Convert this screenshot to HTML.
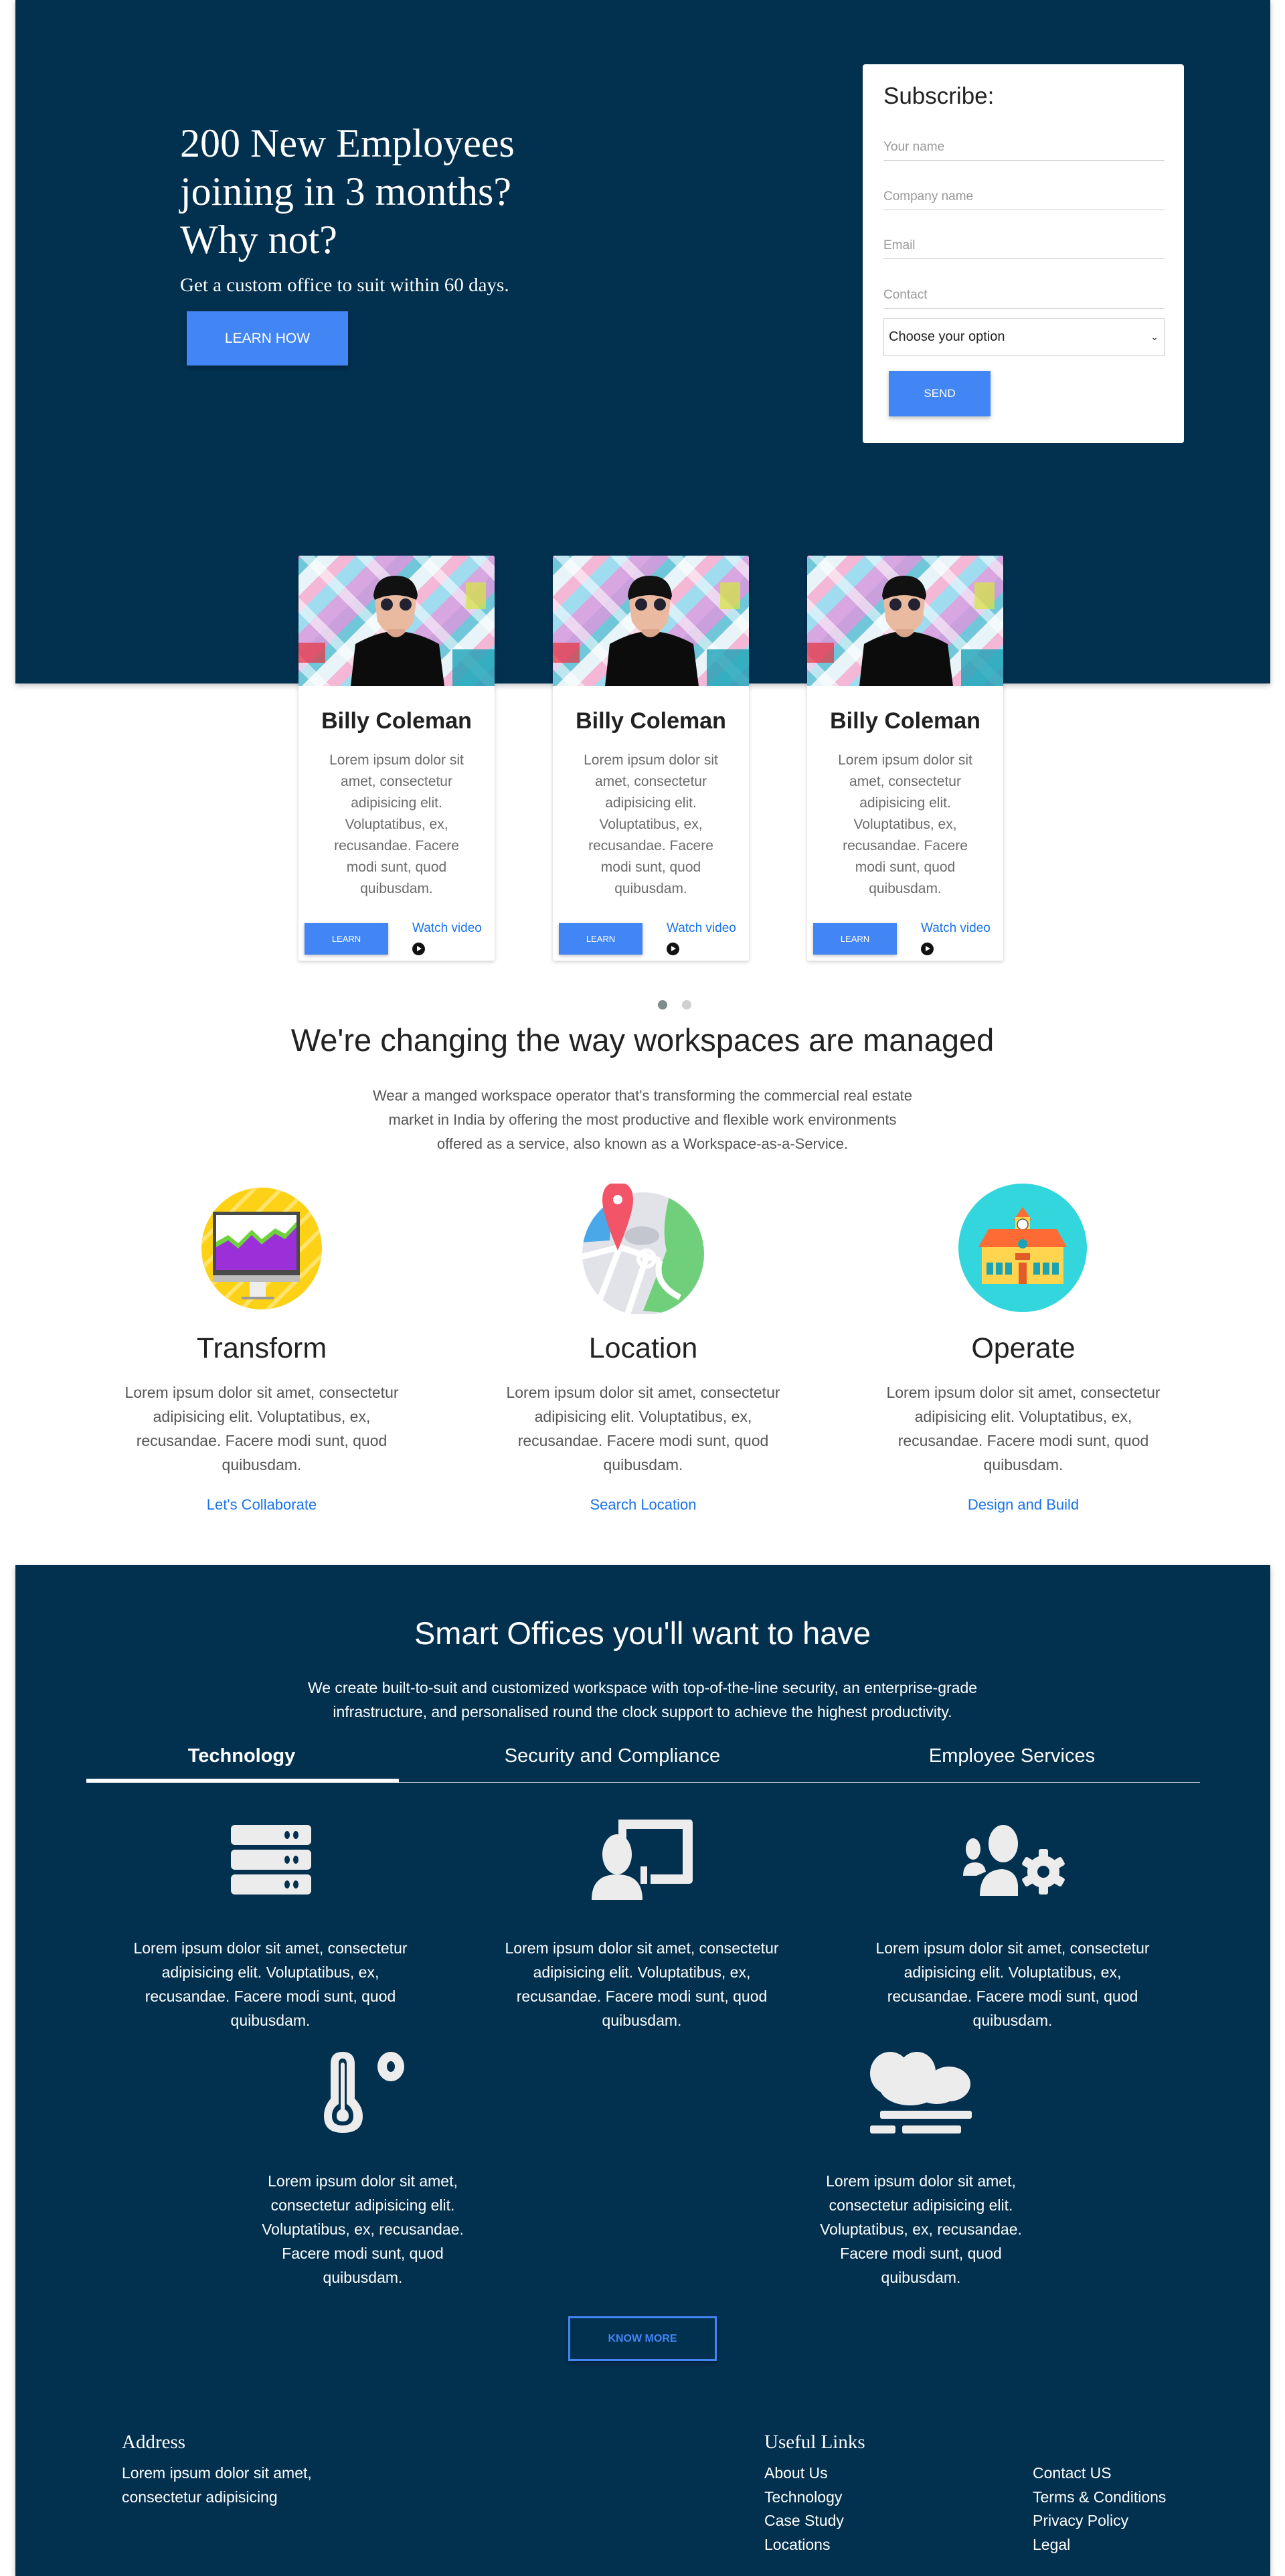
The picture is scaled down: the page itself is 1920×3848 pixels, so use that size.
<!DOCTYPE html>
<html><head><meta charset="utf-8"><style>
*{box-sizing:border-box;margin:0;padding:0}
body{width:1920px;height:3841px;position:relative;overflow:hidden;background:#fff;font-family:"Liberation Sans",Arial,sans-serif}
.a{position:absolute}
.dark{background:#02304f;box-shadow:0 3px 8px rgba(0,0,0,.25)}
.ser{font-family:"Liberation Serif","Times New Roman",serif;color:#fff}
.inp{position:absolute;left:1320px;width:420px;border-bottom:1px solid #ccc;color:#999;font-size:19px;height:40px;line-height:40px}
.btn{position:absolute;background:#4285f4;color:#fff;text-align:center;box-shadow:0 3px 6px rgba(0,0,0,.25)}
.card{position:absolute;top:830px;width:293px;height:605px;background:#fff;box-shadow:0 2px 6px rgba(0,0,0,.2);border-radius:3px;overflow:hidden}
.photo{position:absolute;left:0;top:0;width:293px;height:195px;overflow:hidden;
background:
repeating-linear-gradient(45deg,rgba(255,255,255,.0) 0 18px,rgba(255,255,255,.55) 18px 34px,rgba(0,0,0,0) 34px 60px),
repeating-linear-gradient(-45deg,#d8a6e0 0 22px,#9fdcef 22px 44px,#f4b7d6 44px 62px,#e8f4f8 62px 84px,#6fc7d9 84px 100px,#c9a0dc 100px 120px)}
.card h3{position:absolute;top:228px;left:0;width:293px;text-align:center;font-size:34px;font-weight:bold;color:#212121}
.card p{position:absolute;top:290px;left:0;width:293px;text-align:center;font-size:21px;line-height:32px;color:#6b6b6b;white-space:nowrap}
.cbtn{position:absolute;left:9px;top:549px;width:125px;height:47px;background:#4285f4;color:#fff;font-size:13px;line-height:47px;text-align:center;box-shadow:0 2px 5px rgba(0,0,0,.25)}
.wv{position:absolute;left:170px;top:546px;font-size:19px;color:#1a73e8}
.play{position:absolute;left:170px;top:578px;width:19px;height:19px;border-radius:50%;background:#111}
.play:after{content:"";position:absolute;left:7px;top:5px;border-left:7px solid #fff;border-top:4.5px solid transparent;border-bottom:4.5px solid transparent}
.ctr{text-align:center;white-space:nowrap}
.col{position:absolute;width:560px;text-align:center;white-space:nowrap}
.col h4{font-size:43px;font-weight:normal;color:#222;height:50px}
.col p{font-size:23px;line-height:36px;color:#555;margin-top:22px}
.col a{display:block;margin-top:29px;font-size:22px;color:#1a73e8;text-decoration:none}
.wt{position:absolute;width:520px;text-align:center;color:#fff;font-size:23px;line-height:36px;white-space:nowrap}
.fl{position:absolute;color:#fff;font-size:23px;line-height:35.7px}
</style></head><body>

<div class="a dark" style="left:23px;top:0;width:1875px;height:1021px"></div>

<div class="a ser" style="left:269px;top:178px;font-size:60px;line-height:72px">200 New Employees<br>joining in 3 months?<br>Why not?</div>
<div class="a ser" style="left:269px;top:409px;font-size:29px;line-height:34px">Get a custom office to suit within 60 days.</div>
<div class="btn" style="left:279px;top:465px;width:241px;height:81px;line-height:81px;font-size:21px">LEARN HOW</div>

<div class="a" style="left:1289px;top:96px;width:480px;height:566px;background:#fff;border-radius:4px"></div>
<div class="a" style="left:1320px;top:124px;font-size:35px;color:#222">Subscribe:</div>
<div class="inp" style="top:200px">Your name</div>
<div class="inp" style="top:274px">Company name</div>
<div class="inp" style="top:347px">Email</div>
<div class="inp" style="top:421px">Contact</div>
<div class="a" style="left:1320px;top:475px;width:420px;height:57px;border:1px solid #ccc;font-size:20px;line-height:55px;padding-left:7px;color:#222">Choose your option<span style="position:absolute;right:8px;top:0;font-size:14px">&#8964;</span></div>
<div class="btn" style="left:1328px;top:554px;width:152px;height:68px;line-height:68px;font-size:17px">SEND</div>

<!-- cards -->
<div class="card" style="left:446px"><div class="photo"><svg width="293" height="195" style="position:absolute;left:0;top:0"><rect x="0" y="130" width="40" height="30" fill="#e8323c" opacity=".7"/><rect x="250" y="40" width="30" height="40" fill="#d6e83a" opacity=".7"/><rect x="230" y="140" width="63" height="55" fill="#1aa3b5" opacity=".8"/><path d="M116 82 Q108 46 145 44 Q182 46 174 82 L172 98 Q160 118 145 118 Q130 118 118 98Z" fill="#e9b9a0"/><path d="M112 60 Q115 30 145 30 Q175 30 178 60 L176 66 Q145 52 114 66Z" fill="#111"/><circle cx="132" cy="73" r="9" fill="#223"/><circle cx="160" cy="73" r="9" fill="#223"/><rect x="133" y="110" width="26" height="25" fill="#dba58c"/><path d="M78 195 L85 132 Q110 118 132 114 Q145 130 160 114 Q185 118 210 132 L218 195Z" fill="#0c0c0c"/></svg></div><h3>Billy Coleman</h3><p>Lorem ipsum dolor sit<br>amet, consectetur<br>adipisicing elit.<br>Voluptatibus, ex,<br>recusandae. Facere<br>modi sunt, quod<br>quibusdam.</p><div class="cbtn">LEARN</div><div class="wv">Watch video</div><div class="play"></div></div>

<div class="card" style="left:826px"><div class="photo"><svg width="293" height="195" style="position:absolute;left:0;top:0"><rect x="0" y="130" width="40" height="30" fill="#e8323c" opacity=".7"/><rect x="250" y="40" width="30" height="40" fill="#d6e83a" opacity=".7"/><rect x="230" y="140" width="63" height="55" fill="#1aa3b5" opacity=".8"/><path d="M116 82 Q108 46 145 44 Q182 46 174 82 L172 98 Q160 118 145 118 Q130 118 118 98Z" fill="#e9b9a0"/><path d="M112 60 Q115 30 145 30 Q175 30 178 60 L176 66 Q145 52 114 66Z" fill="#111"/><circle cx="132" cy="73" r="9" fill="#223"/><circle cx="160" cy="73" r="9" fill="#223"/><rect x="133" y="110" width="26" height="25" fill="#dba58c"/><path d="M78 195 L85 132 Q110 118 132 114 Q145 130 160 114 Q185 118 210 132 L218 195Z" fill="#0c0c0c"/></svg></div><h3>Billy Coleman</h3><p>Lorem ipsum dolor sit<br>amet, consectetur<br>adipisicing elit.<br>Voluptatibus, ex,<br>recusandae. Facere<br>modi sunt, quod<br>quibusdam.</p><div class="cbtn">LEARN</div><div class="wv">Watch video</div><div class="play"></div></div>

<div class="card" style="left:1206px"><div class="photo"><svg width="293" height="195" style="position:absolute;left:0;top:0"><rect x="0" y="130" width="40" height="30" fill="#e8323c" opacity=".7"/><rect x="250" y="40" width="30" height="40" fill="#d6e83a" opacity=".7"/><rect x="230" y="140" width="63" height="55" fill="#1aa3b5" opacity=".8"/><path d="M116 82 Q108 46 145 44 Q182 46 174 82 L172 98 Q160 118 145 118 Q130 118 118 98Z" fill="#e9b9a0"/><path d="M112 60 Q115 30 145 30 Q175 30 178 60 L176 66 Q145 52 114 66Z" fill="#111"/><circle cx="132" cy="73" r="9" fill="#223"/><circle cx="160" cy="73" r="9" fill="#223"/><rect x="133" y="110" width="26" height="25" fill="#dba58c"/><path d="M78 195 L85 132 Q110 118 132 114 Q145 130 160 114 Q185 118 210 132 L218 195Z" fill="#0c0c0c"/></svg></div><h3>Billy Coleman</h3><p>Lorem ipsum dolor sit<br>amet, consectetur<br>adipisicing elit.<br>Voluptatibus, ex,<br>recusandae. Facere<br>modi sunt, quod<br>quibusdam.</p><div class="cbtn">LEARN</div><div class="wv">Watch video</div><div class="play"></div></div>

<div class="a" style="left:983px;top:1494px;width:14px;height:14px;border-radius:50%;background:#7f8c8d"></div>
<div class="a" style="left:1019px;top:1494px;width:14px;height:14px;border-radius:50%;background:#d0d0d0"></div>

<div class="a ctr" style="left:0;width:1920px;top:1526px;font-size:47px;color:#222">We're changing the way workspaces are managed</div>
<div class="a ctr" style="left:0;width:1920px;top:1619px;font-size:22px;line-height:36px;color:#555">Wear a manged workspace operator that's transforming the commercial real estate<br>market in India by offering the most productive and flexible work environments<br>offered as a service, also known as a Workspace-as-a-Service.</div>

<!-- feature icons -->
<svg class="a" style="left:291px;top:1765px" width="200" height="200" viewBox="0 0 200 200">
<defs><clipPath id="c1"><ellipse cx="100" cy="100" rx="90" ry="91"/></clipPath></defs>
<ellipse cx="100" cy="100" rx="90" ry="91" fill="#fcd116"/>
<g clip-path="url(#c1)" stroke="#ffe36a" stroke-width="6"><path d="M0 180 L180 0 M20 200 L200 20 M-20 160 L160 -20 M40 220 L220 40 M-40 140 L140 -40 M60 240 L240 60"/></g>
<rect x="27" y="45" width="130" height="95" fill="#4a4a4a"/><rect x="32" y="50" width="120" height="82" fill="#fff"/>
<path d="M32 132 L32 90 L50 80 L65 92 L85 72 L100 86 L120 70 L135 78 L152 60 L152 132Z" fill="#6fd13b"/>
<path d="M32 132 L32 98 L50 88 L65 100 L85 80 L100 94 L120 78 L135 86 L152 68 L152 132Z" fill="#9b30d9"/>
<rect x="27" y="140" width="130" height="10" fill="#bdbdbd"/><rect x="82" y="150" width="24" height="22" fill="#eee"/><rect x="70" y="172" width="48" height="4" fill="#999"/>
</svg>
<svg class="a" style="left:866px;top:1768px" width="200" height="195" viewBox="0 0 200 195">
<defs><clipPath id="c2"><ellipse cx="95" cy="105" rx="91" ry="92"/></clipPath></defs>
<ellipse cx="95" cy="105" rx="91" ry="92" fill="#e2e3e8"/>
<g clip-path="url(#c2)"><path d="M0 0 L50 0 L45 85 L0 88Z" fill="#4aa8e8"/><path d="M140 0 Q120 60 130 100 L95 190 L200 200 L200 0Z" fill="#6fcf7a"/>
<path d="M0 110 L60 95 L120 115 M60 95 L20 200 M100 110 L70 200 M120 115 Q110 150 150 170" stroke="#fff" stroke-width="9" fill="none"/><circle cx="100" cy="112" r="12" fill="none" stroke="#fff" stroke-width="6"/><ellipse cx="93" cy="78" rx="26" ry="14" fill="#c4c6cf"/></g>
<path d="M57 -2 Q34 -2 34 25 Q34 45 57 100 Q80 45 80 25 Q80 -2 57 -2Z" fill="#f25468"/><circle cx="57" cy="24" r="7" fill="#fff"/>
</svg>
<svg class="a" style="left:1432px;top:1768px" width="200" height="195" viewBox="0 0 200 195">
<ellipse cx="96" cy="96" rx="96" ry="96" fill="#33d6dc"/>
<path d="M96 35 L110 55 L82 55Z" fill="#ff6b35"/><rect x="85" y="50" width="22" height="30" fill="#ffd54f"/><circle cx="96" cy="61" r="8" fill="#fff" stroke="#555" stroke-width="1.5"/>
<path d="M30 95 L45 68 L147 68 L162 95Z" fill="#ff6b35"/><path d="M70 95 L96 70 L122 95Z" fill="#ff6b35"/>
<rect x="35" y="95" width="122" height="55" fill="#ffd54f"/><circle cx="96" cy="90" r="7" fill="#1aa3b5"/>
<rect x="85" y="104" width="22" height="10" fill="#e25b2a"/>
<g fill="#1aa3b5"><rect x="42" y="118" width="10" height="18"/><rect x="56" y="118" width="10" height="18"/><rect x="70" y="118" width="10" height="18"/><rect x="112" y="118" width="10" height="18"/><rect x="126" y="118" width="10" height="18"/><rect x="140" y="118" width="10" height="18"/></g>
<rect x="90" y="118" width="12" height="32" fill="#e25b2a"/>
</svg>

<div class="col" style="left:111px;top:1990px"><h4>Transform</h4><p>Lorem ipsum dolor sit amet, consectetur<br>adipisicing elit. Voluptatibus, ex,<br>recusandae. Facere modi sunt, quod<br>quibusdam.</p><a>Let's Collaborate</a></div>
<div class="col" style="left:681px;top:1990px"><h4>Location</h4><p>Lorem ipsum dolor sit amet, consectetur<br>adipisicing elit. Voluptatibus, ex,<br>recusandae. Facere modi sunt, quod<br>quibusdam.</p><a>Search Location</a></div>
<div class="col" style="left:1249px;top:1990px"><h4>Operate</h4><p>Lorem ipsum dolor sit amet, consectetur<br>adipisicing elit. Voluptatibus, ex,<br>recusandae. Facere modi sunt, quod<br>quibusdam.</p><a>Design and Build</a></div>

<!-- dark section 2 -->
<div class="a dark" style="left:23px;top:2338px;width:1875px;height:1510px"></div>
<div class="a ctr" style="left:0;width:1920px;top:2412px;font-size:47px;color:#fff">Smart Offices you'll want to have</div>
<div class="a ctr" style="left:0;width:1920px;top:2503px;font-size:23px;line-height:36px;color:#fff">We create built-to-suit and customized workspace with top-of-the-line security, an enterprise-grade<br>infrastructure, and personalised round the clock support to achieve the highest productivity.</div>

<div class="a" style="left:261px;top:2607px;width:200px;text-align:center;color:#fff;font-size:29px;font-weight:bold">Technology</div>
<div class="a" style="left:715px;top:2607px;width:400px;text-align:center;color:#fff;font-size:29px">Security and Compliance</div>
<div class="a" style="left:1312px;top:2607px;width:400px;text-align:center;color:#fff;font-size:29px">Employee Services</div>
<div class="a" style="left:129px;top:2662px;width:1664px;height:1px;background:#c8d0d8"></div>
<div class="a" style="left:129px;top:2657px;width:467px;height:6px;background:#fff"></div>

<!-- tech icons -->
<svg class="a" style="left:345px;top:2726px" width="120" height="104" viewBox="0 0 120 104" fill="#ececec">
<rect x="0" y="0" width="120" height="30" rx="6"/><rect x="0" y="37" width="120" height="30" rx="6"/><rect x="0" y="74" width="120" height="30" rx="6"/>
<g fill="#02304f"><ellipse cx="84" cy="15" rx="4" ry="6"/><ellipse cx="97" cy="15" rx="4" ry="6"/><ellipse cx="84" cy="52" rx="4" ry="6"/><ellipse cx="97" cy="52" rx="4" ry="6"/><ellipse cx="84" cy="89" rx="4" ry="6"/><ellipse cx="97" cy="89" rx="4" ry="6"/></g>
</svg>
<svg class="a" style="left:884px;top:2718px" width="152" height="120" viewBox="0 0 152 120" fill="#ececec">
<path d="M40 0 L146 0 Q151 0 151 6 L151 90 Q151 96 145 96 L88 96 L88 82 L136 82 L136 14 L52 14 L52 30 L40 30Z"/>
<rect x="73" y="70" width="10" height="26"/>
<ellipse cx="38" cy="52" rx="22" ry="30"/>
<path d="M0 120 Q0 82 38 82 Q76 82 76 120Z"/>
</svg>
<svg class="a" style="left:1439px;top:2726px" width="152" height="106" viewBox="0 0 152 106" fill="#ececec">
<ellipse cx="60" cy="28" rx="22" ry="28"/><ellipse cx="15" cy="36" rx="11" ry="16"/>
<path d="M0 76 Q0 56 18 56 Q32 56 34 70 L20 76Z"/>
<path d="M25 106 Q25 68 58 66 Q80 68 82 90 L82 106Z"/>
<circle cx="120" cy="70" r="24"/><g transform="translate(120 70)"><rect x="-7" y="-34" width="14" height="68" rx="3"/><rect x="-7" y="-34" width="14" height="68" rx="3" transform="rotate(60)"/><rect x="-7" y="-34" width="14" height="68" rx="3" transform="rotate(-60)"/></g>
<circle cx="120" cy="70" r="9" fill="#02304f"/>
</svg>

<div class="wt" style="left:144px;top:2892px">Lorem ipsum dolor sit amet, consectetur<br>adipisicing elit. Voluptatibus, ex,<br>recusandae. Facere modi sunt, quod<br>quibusdam.</div>
<div class="wt" style="left:699px;top:2892px">Lorem ipsum dolor sit amet, consectetur<br>adipisicing elit. Voluptatibus, ex,<br>recusandae. Facere modi sunt, quod<br>quibusdam.</div>
<div class="wt" style="left:1253px;top:2892px">Lorem ipsum dolor sit amet, consectetur<br>adipisicing elit. Voluptatibus, ex,<br>recusandae. Facere modi sunt, quod<br>quibusdam.</div>

<svg class="a" style="left:484px;top:3065px" width="122" height="122" viewBox="0 0 122 122" fill="#ececec">
<path d="M10 18 Q10 0 28 0 Q46 0 46 18 L46 70 Q58 82 58 96 Q58 121 28 121 Q0 121 0 96 Q0 82 10 70Z"/>
<path d="M22 18 Q22 10 28 10 Q34 10 34 18 L34 78 Q44 84 44 96 Q44 110 28 110 Q12 110 12 96 Q12 84 22 78Z" fill="#02304f"/>
<path d="M25 20 Q25 16 28 16 Q31 16 31 20 L31 86 Q37 89 37 96 Q37 104 28 104 Q19 104 19 96 Q19 89 25 86Z"/>
<ellipse cx="100" cy="22" rx="20" ry="22"/><ellipse cx="100" cy="22" rx="6" ry="8" fill="#02304f"/>
</svg>
<svg class="a" style="left:1300px;top:3065px" width="152" height="122" viewBox="0 0 152 122" fill="#ececec">
<ellipse cx="30" cy="32" rx="30" ry="32"/><ellipse cx="70" cy="30" rx="28" ry="30"/><ellipse cx="118" cy="48" rx="32" ry="26"/><ellipse cx="60" cy="52" rx="46" ry="28"/><ellipse cx="100" cy="60" rx="30" ry="18"/>
<rect x="15" y="88" width="137" height="12" rx="3"/><rect x="0" y="110" width="38" height="12" rx="3"/><rect x="48" y="110" width="88" height="12" rx="3"/>
</svg>

<div class="wt" style="left:282px;top:3240px">Lorem ipsum dolor sit amet,<br>consectetur adipisicing elit.<br>Voluptatibus, ex, recusandae.<br>Facere modi sunt, quod<br>quibusdam.</div>
<div class="wt" style="left:1116px;top:3240px">Lorem ipsum dolor sit amet,<br>consectetur adipisicing elit.<br>Voluptatibus, ex, recusandae.<br>Facere modi sunt, quod<br>quibusdam.</div>

<div class="a" style="left:849px;top:3460px;width:222px;height:67px;border:3px solid #4285f4;color:#4285f4;font-size:16px;font-weight:bold;text-align:center;line-height:61px;box-shadow:0 3px 6px rgba(0,0,0,.3)">KNOW MORE</div>

<div class="a ser" style="left:182px;top:3632px;font-size:29px">Address</div>
<div class="fl" style="left:182px;top:3677px">Lorem ipsum dolor sit amet,<br>consectetur adipisicing</div>
<div class="a ser" style="left:1142px;top:3632px;font-size:29px">Useful Links</div>
<div class="fl" style="left:1142px;top:3677px">About Us<br>Technology<br>Case Study<br>Locations</div>
<div class="fl" style="left:1543px;top:3677px">Contact US<br>Terms &amp; Conditions<br>Privacy Policy<br>Legal</div>

</body></html>
